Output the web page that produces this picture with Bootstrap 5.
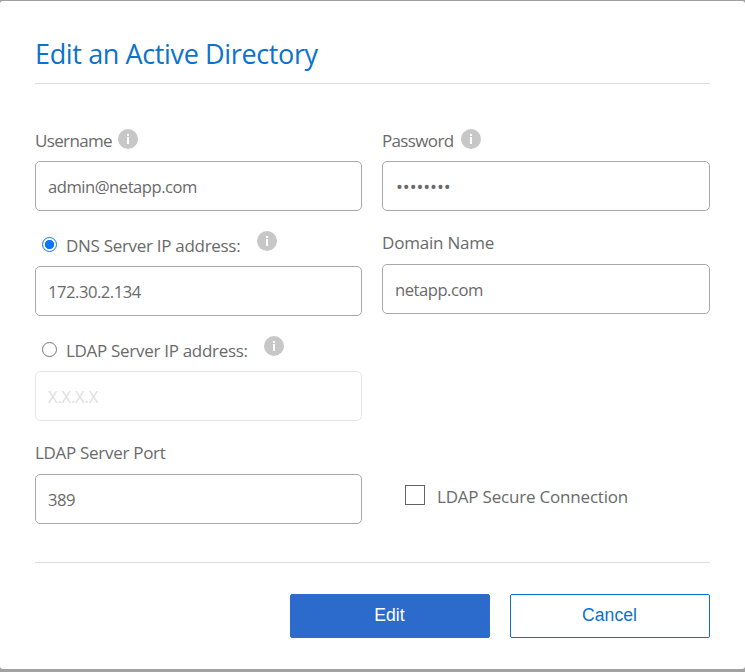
<!DOCTYPE html>
<html lang="en">
<head>
<meta charset="utf-8">
<title>Edit an Active Directory</title>
<link href="https://cdn.jsdelivr.net/npm/bootstrap@5.3.0/dist/css/bootstrap.min.css" rel="stylesheet">
<style>
body{background:#a1a1a1;font-family:"Open Sans","Noto Sans",sans-serif;font-size:17px;letter-spacing:-.2px;color:#6a6a6a;height:672px;overflow:hidden;padding-top:1px}
.dialog{height:668px;border-radius:3px;padding:0 35px}
.dialog-title{height:83px;margin:0;padding-top:33px;border-bottom:1px solid #dcdcdc;color:#0b72cd;font-size:27px;line-height:40px;font-weight:400;letter-spacing:-.37px}
.fields{gap:20px;padding-top:27px}
.col-left{width:327px}
.col-right{width:328px}
.label-row{height:55px;line-height:24px;padding-top:23px;letter-spacing:-.3px;white-space:nowrap}
.label-top{height:50px;padding-top:18px;letter-spacing:-.65px}
.label-short{height:53px;padding-top:20px}
.label-domain{letter-spacing:-.2px}
.field{height:50px;border:1px solid #a9a9a9;border-radius:5px;padding:0 12px;font-size:16.6px;line-height:24px;letter-spacing:-.48px;color:#6a6a6a}
.field[type=password]{font-size:18.4px;letter-spacing:-.1px;padding-left:13px}
.field:disabled{background:#fff;border-color:#e6e6e6;opacity:1;letter-spacing:-.2px}
.field:disabled::placeholder{color:#dedede}
.info{width:20px;height:20px;flex:none}
.label-top .info{margin-left:6px}
.label-top .info-pass{margin-left:8px}
.info-address{margin:-3px 0 0 16px}
.info-dns{margin-left:17px}
.radio{width:15px;height:15px;margin:3px 9px 0 7px;flex:none;appearance:none;border:1px solid #757575;border-radius:50%}
.radio:checked{border:1px solid #0b76fa;background:radial-gradient(circle,#0b76fa 0 4.3px,#fff 5px)}
.secure{padding:171px 0 0 23px;line-height:24px}
.secure input{appearance:none;width:20px;height:20px;border:1px solid #606468;margin:0 12px 0 0}
.actions{margin-top:38px;border-top:1px solid #dcdcdc;padding-top:31px;gap:20px}
.action{width:200px;height:44px;border-radius:2px;font:17.6px/24px "Liberation Sans",Arial,sans-serif;letter-spacing:0;padding:0 1px 2px 0}
.action-main{background:#2c6acb;border:1px solid #2c6acb;color:#fff}
.action-alt{background:#fff;border:1px solid #0b72cd;color:#0b72cd}
</style>
</head>
<body>
<svg class="d-none"><symbol id="info" viewBox="0 0 20 20"><circle cx="10" cy="10" r="10" fill="#c7c7c7"/><path d="M9 5h2v2H9zM9 8h2v7H9z" fill="#fff"/></symbol></svg>
<form class="dialog bg-white">
<h1 class="dialog-title">Edit an Active Directory</h1>
<div class="fields d-flex">
<div class="col-left">
<label class="label-row label-top d-flex" for="user"><span>Username</span><svg class="info"><use href="#info"/></svg></label>
<input id="user" class="form-control field" value="admin@netapp.com">
<label class="label-row d-flex"><input class="radio" type="radio" name="server" checked><span>DNS Server IP address:</span><svg class="info info-address info-dns"><use href="#info"/></svg></label>
<input class="form-control field" value="172.30.2.134">
<label class="label-row d-flex"><input class="radio" type="radio" name="server"><span>LDAP Server IP address:</span><svg class="info info-address"><use href="#info"/></svg></label>
<input class="form-control field" placeholder="X.X.X.X" disabled>
<label class="label-row label-short d-flex" for="port">LDAP Server Port</label>
<input id="port" class="form-control field" value="389">
</div>
<div class="col-right">
<label class="label-row label-top d-flex" for="pass"><span>Password</span><svg class="info info-pass"><use href="#info"/></svg></label>
<input id="pass" class="form-control field" type="password" value="password">
<label class="label-row label-short label-domain d-flex" for="domain">Domain Name</label>
<input id="domain" class="form-control field" value="netapp.com">
<label class="secure d-flex"><input type="checkbox"><span>LDAP Secure Connection</span></label>
</div>
</div>
<div class="actions d-flex justify-content-end">
<button type="button" class="btn action action-main">Edit</button>
<button type="button" class="btn action action-alt">Cancel</button>
</div>
</form>
<script src="https://cdn.jsdelivr.net/npm/bootstrap@5.3.0/dist/js/bootstrap.bundle.min.js"></script>
</body>
</html>
